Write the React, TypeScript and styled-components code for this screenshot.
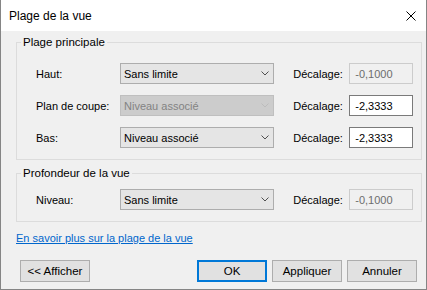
import styled, { createGlobalStyle } from 'styled-components'

const GlobalStyle = createGlobalStyle`
  html, body {
    margin: 0;
    padding: 0;
    background: #ffffff;
  }
  body {
    font-family: "Liberation Sans", Arial, sans-serif;
    font-size: 11px;
    color: #000000;
  }
`

const Window = styled.div`
  width: 427px;
  height: 290px;
  box-sizing: border-box;
  border: 1px solid #858585;
  border-top: none;
  background: #f0f0f0;
  display: flex;
  flex-direction: column;
`

const TitleBar = styled.div`
  display: flex;
  align-items: center;
  justify-content: space-between;
  height: 31px;
  flex-shrink: 0;
  padding: 0 10px 0 8px;
  background: #ffffff;
  font-size: 12px;
`

const CloseButton = styled.button`
  display: flex;
  align-items: center;
  justify-content: center;
  width: 10px;
  height: 10px;
  padding: 0;
  margin-top: 1px;
  border: none;
  background: transparent;
`

const Body = styled.div`
  display: flex;
  flex-direction: column;
  padding: 3px 4px 0 15px;
`

const Group = styled.fieldset<{ $top: number; $gap: number }>`
  margin: ${({ $gap }) => $gap}px 0 0 0;
  padding: ${({ $top }) => $top}px 8px 11px 4px;
  border: 1px solid #dcdcdc;
  min-width: 0;
`

const Legend = styled.legend`
  padding: 0 2px;
  line-height: 16px;
  font-size: 11.5px;
`

const Rows = styled.div`
  display: flex;
  flex-direction: column;
  gap: 11px;
  padding-left: 15px;
`

const Row = styled.div`
  display: flex;
  align-items: center;
  height: 21px;
`

const Label = styled.span`
  width: 84px;
  flex-shrink: 0;
`

const Select = styled.div<{ $disabled?: boolean }>`
  display: flex;
  align-items: center;
  justify-content: space-between;
  box-sizing: border-box;
  width: 155px;
  height: 21px;
  padding-left: 3px;
  border: 1px solid ${({ $disabled }) => ($disabled ? '#bfbfbf' : '#adadad')};
  background: ${({ $disabled }) => ($disabled ? '#cccccc' : '#e5e5e5')};
  color: ${({ $disabled }) => ($disabled ? '#838383' : '#000000')};
`

const Arrow = styled.span`
  display: flex;
  align-items: center;
  justify-content: center;
  width: 17px;
`

const OffsetLabel = styled.span`
  width: 56px;
  margin-left: 19px;
  flex-shrink: 0;
`

const Input = styled.div<{ $disabled?: boolean }>`
  display: flex;
  align-items: center;
  box-sizing: border-box;
  width: 64px;
  height: 21px;
  padding-left: 5px;
  border: 1px solid ${({ $disabled }) => ($disabled ? '#cccccc' : '#7a7a7a')};
  background: ${({ $disabled }) => ($disabled ? '#f0f0f0' : '#ffffff')};
  color: ${({ $disabled }) => ($disabled ? '#6d6d6d' : '#000000')};
`

const Link = styled.a`
  align-self: flex-start;
  margin-top: 8px;
  line-height: 16px;
  color: #0066cc;
  text-decoration: underline;
  cursor: pointer;
`

const ButtonBar = styled.div`
  display: flex;
  align-items: center;
  margin-top: 14px;
  padding: 0 5px 0 4px;
`

const Spacer = styled.div`
  flex: 1;
`

const Button = styled.button<{ $default?: boolean }>`
  box-sizing: border-box;
  width: 70px;
  height: 22px;
  margin-left: ${({ $default }) => ($default ? 0 : 5)}px;
  padding: 0;
  font-family: inherit;
  font-size: 11.5px;
  color: #000000;
  background: #e1e1e1;
  border: ${({ $default }) => ($default ? '2px solid #0078d7' : '1px solid #adadad')};
`

const FirstButton = styled(Button)`
  margin-left: 0;
`

const Chevron = ({ disabled }: { disabled?: boolean }) => (
  <svg width="8" height="5" viewBox="0 0 8 5">
    <polyline
      points="0.5,0.5 4,4 7.5,0.5"
      fill="none"
      stroke={disabled ? '#bcbcbc' : '#505050'}
      strokeWidth="1"
    />
  </svg>
)

type RangeRow = {
  label: string
  value: string
  offset: string
  selectDisabled?: boolean
  offsetDisabled?: boolean
}

const mainRows: RangeRow[] = [
  { label: 'Haut:', value: 'Sans limite', offset: '-0,1000', offsetDisabled: true },
  { label: 'Plan de coupe:', value: 'Niveau associé', offset: '-2,3333', selectDisabled: true },
  { label: 'Bas:', value: 'Niveau associé', offset: '-2,3333' },
]

const depthRows: RangeRow[] = [
  { label: 'Niveau:', value: 'Sans limite', offset: '-0,1000', offsetDisabled: true },
]

function RangeRows({ rows }: { rows: RangeRow[] }) {
  return (
    <Rows>
      {rows.map((row) => (
        <Row key={row.label}>
          <Label>{row.label}</Label>
          <Select $disabled={row.selectDisabled}>
            {row.value}
            <Arrow>
              <Chevron disabled={row.selectDisabled} />
            </Arrow>
          </Select>
          <OffsetLabel>Décalage:</OffsetLabel>
          <Input $disabled={row.offsetDisabled}>{row.offset}</Input>
        </Row>
      ))}
    </Rows>
  )
}

export default function App() {
  return (
    <>
      <GlobalStyle />
      <Window>
        <TitleBar>
          <span>Plage de la vue</span>
          <CloseButton aria-label="Fermer">
            <svg width="10" height="10" viewBox="0 0 10 10">
              <path d="M0.5 0.5 L9.5 9.5 M9.5 0.5 L0.5 9.5" stroke="#000" strokeWidth="1" />
            </svg>
          </CloseButton>
        </TitleBar>
        <Body>
          <Group $top={13} $gap={0}>
            <Legend>Plage principale</Legend>
            <RangeRows rows={mainRows} />
          </Group>
          <Group $top={8} $gap={5}>
            <Legend>Profondeur de la vue</Legend>
            <RangeRows rows={depthRows} />
          </Group>
          <Link>En savoir plus sur la plage de la vue</Link>
          <ButtonBar>
            <FirstButton>&lt;&lt; Afficher</FirstButton>
            <Spacer />
            <Button $default>OK</Button>
            <Button>Appliquer</Button>
            <Button>Annuler</Button>
          </ButtonBar>
        </Body>
      </Window>
    </>
  )
}
